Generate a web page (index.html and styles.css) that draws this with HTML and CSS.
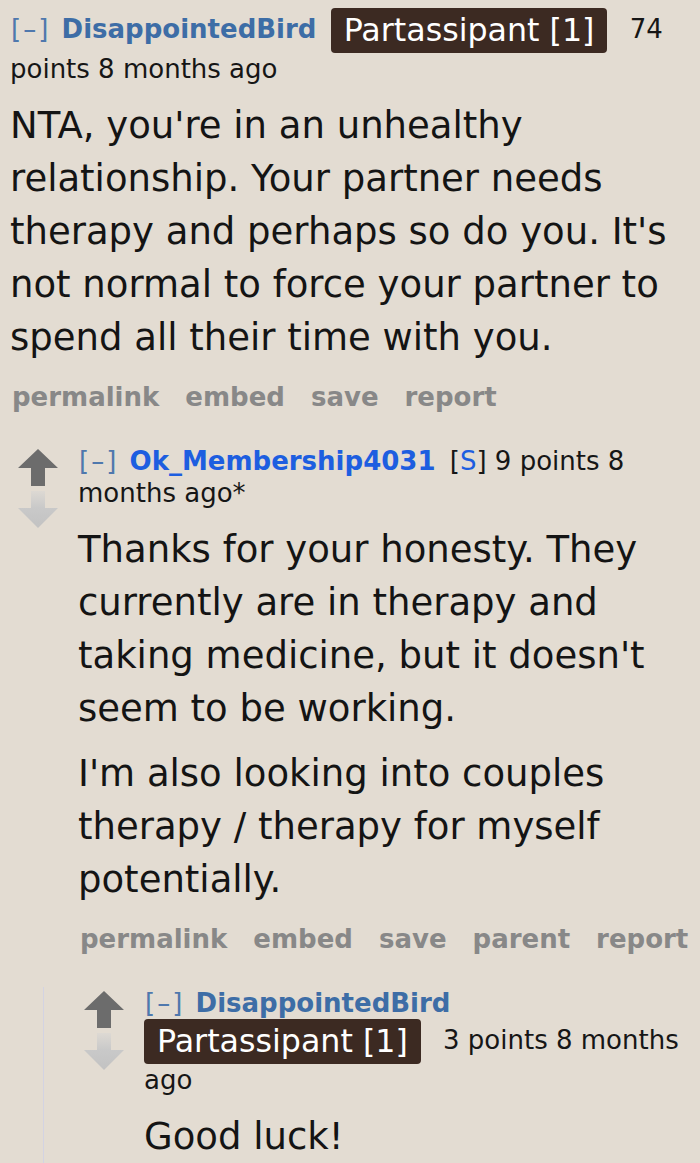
FILE: index.html
```html
<!DOCTYPE html>
<html lang="en">
<head>
    <meta charset="UTF-8">
    <meta name="viewport" content="width=device-width, initial-scale=1.0">
    <title>Comment thread</title>
    <link rel="stylesheet" href="styles.css">
</head>
<body>
    <div class="thread">

        <!-- top level comment (vote arrows are cut off at the left) -->
        <div class="comment comment-top">
            <div class="entry">
                <p class="tagline"><a class="expand">[–]</a> <a class="author">DisappointedBird</a> <span class="flair">Partassipant [1]</span> 74 points 8 months ago</p>
                <div class="md">
                    <p>NTA, you're in an unhealthy relationship. Your partner needs therapy and perhaps so do you. It's not normal to force your partner to spend all their time with you.</p>
                </div>
                <ul class="buttons">
                    <li>permalink</li>
                    <li>embed</li>
                    <li>save</li>
                    <li>report</li>
                </ul>
            </div>

            <div class="child child-top">
                <div class="comment">
                    <div class="comment-row">
                        <div class="midcol">
                            <svg class="arrows" width="40" height="80" viewBox="0 0 40 80">
                                <defs>
                                    <linearGradient id="downFade1" x1="0" y1="0" x2="0" y2="1">
                                        <stop offset="0" stop-color="#ddd9d3" />
                                        <stop offset="0.45" stop-color="#c9c9c9" />
                                        <stop offset="1" stop-color="#c2c2c2" />
                                    </linearGradient>
                                </defs>
                                <path d="M20 0 L40 19 L27 19 L27 37 L13 37 L13 19 L0 19 Z" fill="#6c6c6c" />
                                <path d="M13 42 L27 42 L27 59 L40 59 L20 79 L0 59 L13 59 Z" fill="url(#downFade1)" />
                            </svg>
                        </div>
                        <div class="entry">
                            <p class="tagline"><a class="expand">[–]</a> <a class="author submitter">Ok_Membership4031</a> [<a class="op">S</a>] 9 points 8 months ago*</p>
                            <div class="md">
                                <p>Thanks for your honesty. They currently are in therapy and taking medicine, but it doesn't seem to be working.</p>
                                <p>I'm also looking into couples therapy / therapy for myself potentially.</p>
                            </div>
                            <ul class="buttons">
                                <li>permalink</li>
                                <li>embed</li>
                                <li>save</li>
                                <li>parent</li>
                                <li>report</li>
                            </ul>
                        </div>
                    </div>

                    <div class="child">
                        <div class="comment">
                            <div class="comment-row">
                                <div class="midcol">
                                    <svg class="arrows" width="40" height="80" viewBox="0 0 40 80">
                                        <defs>
                                            <linearGradient id="downFade2" x1="0" y1="0" x2="0" y2="1">
                                                <stop offset="0" stop-color="#ddd9d3" />
                                                <stop offset="0.45" stop-color="#c9c9c9" />
                                                <stop offset="1" stop-color="#c2c2c2" />
                                            </linearGradient>
                                        </defs>
                                        <path d="M20 0 L40 19 L27 19 L27 37 L13 37 L13 19 L0 19 Z" fill="#6c6c6c" />
                                        <path d="M13 42 L27 42 L27 59 L40 59 L20 79 L0 59 L13 59 Z" fill="url(#downFade2)" />
                                    </svg>
                                </div>
                                <div class="entry">
                                    <p class="tagline"><a class="expand">[–]</a> <a class="author">DisappointedBird</a> <span class="flair">Partassipant [1]</span> 3 points 8 months ago</p>
                                    <div class="md">
                                        <p>Good luck!</p>
                                    </div>
                                </div>
                            </div>
                        </div>
                    </div>
                </div>
            </div>
        </div>

    </div>
</body>
</html>
```

FILE: styles.css
```css
/* old style comment thread, zoomed */

body {
    margin: 0;
    background-color: #e3dcd2;
    font-family: "DejaVu Sans", Verdana, sans-serif;
    color: #222;
}

.thread {
    padding: 8px 8px 0 0;
}

.comment-top > .entry {
    padding-left: 10px;
}

.comment-row {
    display: flex;
    align-items: flex-start;
}

.midcol {
    width: 40px;
    flex-shrink: 0;
    padding-top: 4px;
    margin-right: 20px;
}

.arrows {
    display: block;
}

.entry {
    flex: 1;
    min-width: 0;
}

/* author line */

.tagline {
    margin: 0;
    font-size: 26px;
    line-height: 32px;
    color: #161616;
}

.expand {
    color: #4f78ad;
    letter-spacing: 2px;
    margin-left: 1px;
    margin-right: 3px;
}

.author {
    color: #3d6da6;
    font-weight: bold;
    margin-right: 6px;
}

.author.submitter {
    color: #1d5ee0;
}

.op {
    color: #1d5ee0;
}

.flair {
    display: inline-block;
    vertical-align: middle;
    margin: 0 14px 0 0;
    padding: 4px 13px;
    font-size: 31.7px;
    line-height: 37px;
    color: #fff;
    background-color: #3c2a22;
    border-radius: 4px;
}

/* comment text */

.md {
    margin-top: 14px;
}

.md p {
    margin: 0 0 12px;
    font-size: 37px;
    line-height: 53px;
    color: #141414;
}

.buttons {
    list-style: none;
    margin: 0;
    padding: 5px 0 0 2px;
    display: flex;
    gap: 26px;
    font-size: 26px;
    line-height: 32px;
    font-weight: bold;
    color: #888;
}

/* nested replies */

.child {
    margin-top: 32px;
    margin-left: 25px;
    padding-left: 40px;
    border-left: 1px solid #d3d3e2;
}

.child-top {
    margin-left: 0;
    padding-left: 18px;
    border-left: 0;
}
```
